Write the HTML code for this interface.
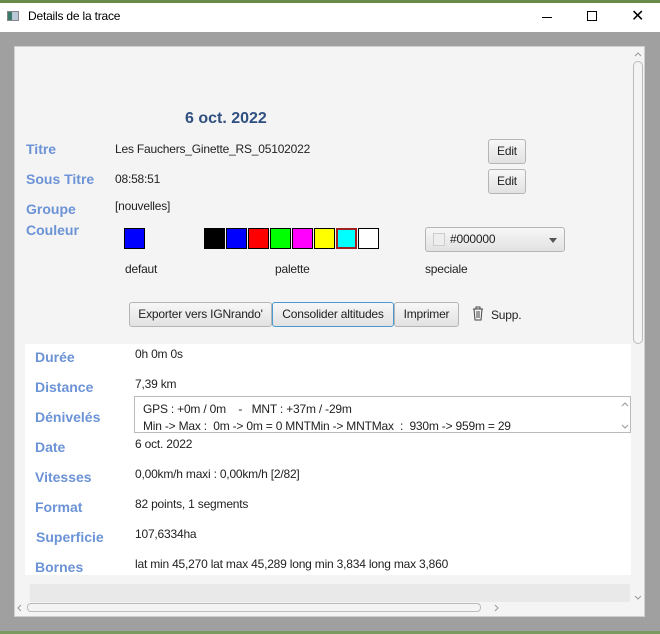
<!DOCTYPE html>
<html><head><meta charset="utf-8"><style>
*{margin:0;padding:0;box-sizing:border-box}
body{width:660px;height:634px;overflow:hidden;background:#a0a0a0;font-family:"Liberation Sans",sans-serif;position:relative}
.a{position:absolute}
.lb{position:absolute;color:#6b93d6;font-weight:bold;font-size:14px;font-family:"Liberation Sans",sans-serif}
.tx{position:absolute;font-size:12px;color:#222;letter-spacing:-0.2px}
.btn{position:absolute;border:1px solid #b5b5b5;border-radius:3px;background:linear-gradient(#f7f7f7,#e2e2e2);font-size:12px;color:#222;text-align:center;line-height:22px;letter-spacing:-0.2px}
.sw{position:absolute;top:228px;width:21px;height:21px;border:1px solid #000}
</style></head><body>
<div class="a" style="left:0;top:0;width:660px;height:3px;background:#6a8a4a"></div>
<div class="a" style="left:0;top:3px;width:660px;height:29px;background:#fff"></div>
<div class="a" style="left:7px;top:11px;width:12px;height:10px;background:linear-gradient(90deg,#3a7a6a 40%,#b8c8d8 40%);border:1px solid #888"></div>
<div class="tx" style="left:28px;top:9px;font-size:12px;color:#000">Details de la trace</div>
<div class="a" style="left:542px;top:17px;width:10px;height:1px;background:#000"></div>
<div class="a" style="left:587px;top:11px;width:10px;height:10px;border:1px solid #000"></div>
<div class="tx" style="left:631px;top:6px;font-size:16px;color:#000">✕</div>

<div class="a" style="left:14px;top:46px;width:631px;height:571px;background:#f4f4f4;border:1px solid #d0d0d0"></div>
<div class="a" style="left:185px;top:110px;font-size:16px;font-weight:bold;color:#2f4f80">6 oct. 2022</div>

<div class="lb" style="left:26px;top:141px">Titre</div>
<div class="lb" style="left:26px;top:171px">Sous Titre</div>
<div class="lb" style="left:26px;top:201px">Groupe</div>
<div class="lb" style="left:26px;top:222px">Couleur</div>
<div class="tx" style="left:115px;top:142px">Les Fauchers_Ginette_RS_05102022</div>
<div class="tx" style="left:115px;top:172px">08:58:51</div>
<div class="tx" style="left:115px;top:199px">[nouvelles]</div>
<div class="btn" style="left:488px;top:139px;width:38px;height:25px">Edit</div>
<div class="btn" style="left:488px;top:169px;width:38px;height:25px">Edit</div>

<div class="sw" style="left:124px;background:#00f"></div>
<div class="sw" style="left:204px;background:#000"></div>
<div class="sw" style="left:226px;background:#00f"></div>
<div class="sw" style="left:248px;background:#f00"></div>
<div class="sw" style="left:270px;background:#0f0"></div>
<div class="sw" style="left:292px;background:#f0f"></div>
<div class="sw" style="left:314px;background:#ff0"></div>
<div class="sw" style="left:336px;background:#0ff;border:2px solid #a02020"></div>
<div class="sw" style="left:358px;background:#fff"></div>
<div class="btn" style="left:425px;top:227px;width:140px;height:25px;text-align:left;padding-left:24px">#000000
<div class="a" style="left:7px;top:5px;width:12px;height:13px;border:1px solid #ccc;background:#eee"></div>
<div class="a" style="left:123px;top:10px;border:4px solid transparent;border-top:5px solid #555"></div></div>
<div class="tx" style="left:125px;top:262px">defaut</div>
<div class="tx" style="left:275px;top:262px">palette</div>
<div class="tx" style="left:425px;top:262px">speciale</div>

<div class="btn" style="left:129px;top:302px;width:143px;height:25px">Exporter vers IGNrando'</div>
<div class="btn" style="left:272px;top:302px;width:122px;height:25px;border-color:#4a9ad0">Consolider altitudes</div>
<div class="btn" style="left:394px;top:302px;width:65px;height:25px">Imprimer</div>
<svg class="a" style="left:472px;top:306px" width="12" height="15" viewBox="0 0 12 15"><path d="M1 3h10M4 3V1h4v2M2 3l1 11h6l1-11M5 5v7M7 5v7" fill="none" stroke="#444" stroke-width="1"/></svg>
<div class="tx" style="left:491px;top:308px">Supp.</div>

<div class="a" style="left:25px;top:344px;width:606px;height:231px;background:#fff"></div>
<div class="lb" style="left:35px;top:349px">Durée</div>
<div class="lb" style="left:35px;top:379px">Distance</div>
<div class="lb" style="left:35px;top:409px">Dénivelés</div>
<div class="lb" style="left:35px;top:439px">Date</div>
<div class="lb" style="left:35px;top:469px">Vitesses</div>
<div class="lb" style="left:35px;top:499px">Format</div>
<div class="lb" style="left:36px;top:529px">Superficie</div>
<div class="lb" style="left:35px;top:559px">Bornes</div>
<div class="tx" style="left:135px;top:347px">0h 0m 0s</div>
<div class="tx" style="left:135px;top:377px">7,39 km</div>
<div class="a" style="left:134px;top:396px;width:497px;height:37px;border:1px solid #bbb;background:#fff;overflow:hidden">
<div class="tx" style="left:8px;top:5px">GPS : +0m / 0m &nbsp;&nbsp; - &nbsp;&nbsp;MNT : +37m / -29m</div>
<div class="tx" style="left:8px;top:22px;white-space:nowrap">Min -&gt; Max :&nbsp; 0m -&gt; 0m = 0 MNTMin -&gt; MNTMax &nbsp;: &nbsp;930m -&gt; 959m = 29</div>
<svg class="a" style="left:486px;top:4px" width="8" height="30"><path d="M1 5l3-3 3 3M1 24l3 3 3-3" fill="none" stroke="#999"/></svg>
</div>
<div class="tx" style="left:135px;top:437px">6 oct. 2022</div>
<div class="tx" style="left:135px;top:467px">0,00km/h maxi : 0,00km/h [2/82]</div>
<div class="tx" style="left:135px;top:497px">82 points, 1 segments</div>
<div class="tx" style="left:135px;top:527px">107,6334ha</div>
<div class="tx" style="left:135px;top:557px">lat min 45,270 lat max 45,289 long min 3,834 long max 3,860</div>
<div class="a" style="left:30px;top:584px;width:600px;height:18px;background:#e9e9e9"></div>

<div class="a" style="left:633px;top:61px;width:10px;height:283px;border:1px solid #bbb;border-radius:5px;background:#f4f4f4"></div>
<svg class="a" style="left:633px;top:50px" width="10" height="8"><path d="M2 6l3-3 3 3" fill="none" stroke="#999"/></svg>
<svg class="a" style="left:633px;top:594px" width="10" height="8"><path d="M2 2l3 3 3-3" fill="none" stroke="#999"/></svg>
<div class="a" style="left:27px;top:603px;width:454px;height:9px;border:1px solid #bbb;border-radius:4px;background:#f4f4f4"></div>
<svg class="a" style="left:15px;top:603px" width="8" height="10"><path d="M6 2l-3 3 3 3" fill="none" stroke="#999"/></svg>
<svg class="a" style="left:493px;top:603px" width="8" height="10"><path d="M2 2l3 3-3 3" fill="none" stroke="#999"/></svg>
<div class="a" style="left:0;top:631px;width:660px;height:3px;background:#7a9a60"></div>
</body></html>
